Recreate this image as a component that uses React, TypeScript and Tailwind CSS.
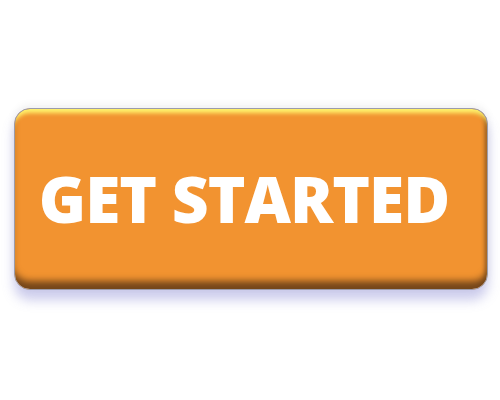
export default function App() {
  return (
    <div className="w-[500px] h-[400px] bg-white flex items-start pt-[108px] pl-[14px]">
      <button
        className="w-[474px] h-[182px] rounded-[16px] border border-[#9c9cab] bg-[#f29330] flex items-center justify-center pr-[14px] shadow-[inset_0_7px_4px_-3px_#fff46e,inset_0_-11px_7px_-3px_#74461a,inset_-4px_0_4px_-2px_#9a5e22,0_10px_12px_rgba(110,110,200,0.35),0_-3px_8px_rgba(0,0,0,0.06)]"
      >
        <span className="text-white font-extrabold text-[64px] leading-none tracking-[-1px] font-['Open_Sans',sans-serif]">
          GET STARTED
        </span>
      </button>
    </div>
  );
}
